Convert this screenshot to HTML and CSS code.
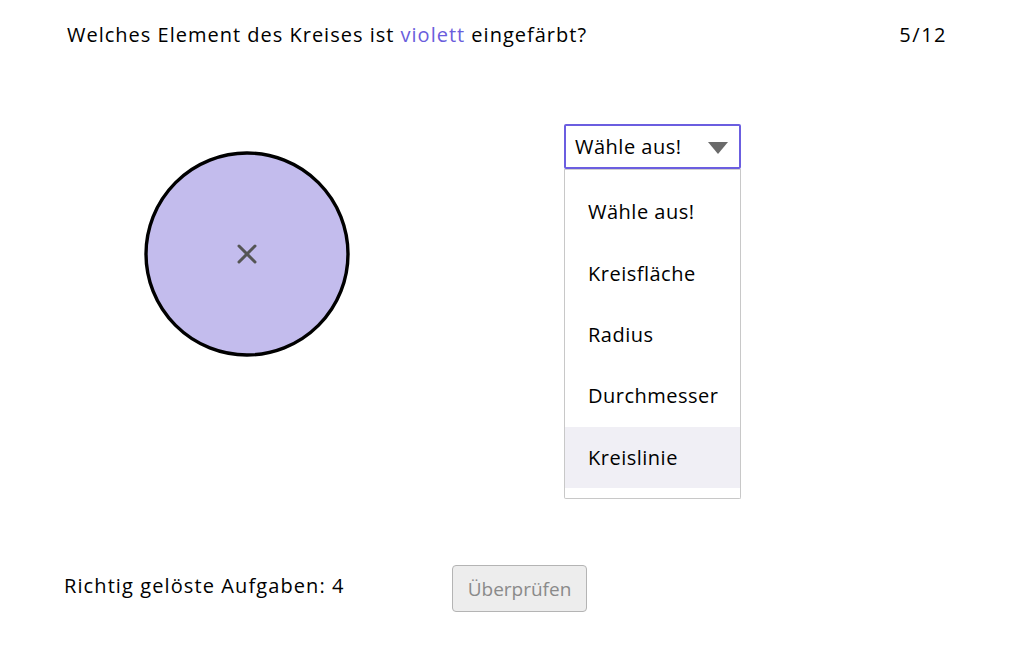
FILE: index.html
```html
<!DOCTYPE html>
<html lang="de">
<head>
<meta charset="utf-8">
<title>Kreis</title>
<link rel="stylesheet" href="styles.css">
</head>
<body>
<div class="page">
  <header class="header">
    <div class="question">Welches Element des Kreises ist <span class="violet">violett</span> eingefärbt?</div>
    <div class="counter">5/12</div>
  </header>
  <main class="main">
    <div class="canvas">
      <svg class="circle" width="210" height="210" viewBox="0 0 210 210">
        <circle cx="105" cy="105" r="101" fill="#c3bced" stroke="#000" stroke-width="3.4"/>
        <path d="M97 97 L113 113 M113 97 L97 113" stroke="#555" stroke-width="3" stroke-linecap="round"/>
      </svg>
    </div>
    <div class="dropdown">
      <div class="select">
        <span>Wähle aus!</span>
        <svg class="arrow" width="20" height="14" viewBox="0 0 20 14"><path d="M0 1 L20 1 L10 13 Z" fill="#6a6a6a"/></svg>
      </div>
      <ul class="options">
        <li class="option">Wähle aus!</li>
        <li class="option">Kreisfläche</li>
        <li class="option">Radius</li>
        <li class="option">Durchmesser</li>
        <li class="option active">Kreislinie</li>
      </ul>
    </div>
  </main>
  <footer class="footer">
    <div class="score">Richtig gelöste Aufgaben: 4</div>
    <button class="check" disabled>Überprüfen</button>
  </footer>
</div>
</body>
</html>
```
FILE: styles.css
```css
html, body {
  margin: 0;
  padding: 0;
  background: #fff;
}
body {
  font-family: "Open Sans", Lato, sans-serif;
  color: #000;
  font-size: 20px;
}
.page {
  width: 1032px;
  height: 645px;
  display: flex;
  flex-direction: column;
  box-sizing: border-box;
}
.header {
  display: flex;
  justify-content: space-between;
  align-items: baseline;
  padding: 21px 86px 0 67px;
  line-height: 28px;
  letter-spacing: 1px;
}
.counter {
  letter-spacing: 1.5px;
  margin-right: -1px;
}
.violet {
  color: #6a5ddc;
}
.main {
  display: flex;
  align-items: flex-start;
  margin-top: 75px;
}
.canvas {
  width: 422px;
  padding-left: 142px;
  padding-top: 25px;
}
.circle {
  display: block;
}
.dropdown {
  width: 177px;
  letter-spacing: 0.5px;
}
.select {
  box-sizing: border-box;
  height: 45px;
  border: 2px solid #6b5ee0;
  border-radius: 2px;
  display: flex;
  align-items: center;
  justify-content: space-between;
  padding: 0 11px 0 9px;
}
.arrow {
  display: block;
  margin-top: 3px;
}
.options {
  list-style: none;
  margin: 0;
  padding: 11px 0 10px;
  border: 1px solid #c8c8c8;
  border-top-color: #d0d0d0;
  border-radius: 0 0 2px 2px;
}
.option {
  height: 61.4px;
  display: flex;
  align-items: center;
  padding-left: 23px;
}
.option.active {
  background: #f0eff5;
}
.footer {
  margin-top: auto;
  display: flex;
  align-items: center;
  padding: 0 0 33px 64px;
}
.score {
  width: 388px;
  letter-spacing: 1.1px;
  margin-bottom: 7px;
}
.check {
  font-family: inherit;
  font-size: 19px;
  color: #8a8a8a;
  background: #ededed;
  border: 1px solid #b4b4b4;
  border-radius: 4px;
  width: 135px;
  height: 47px;
  padding: 0;
}
```
